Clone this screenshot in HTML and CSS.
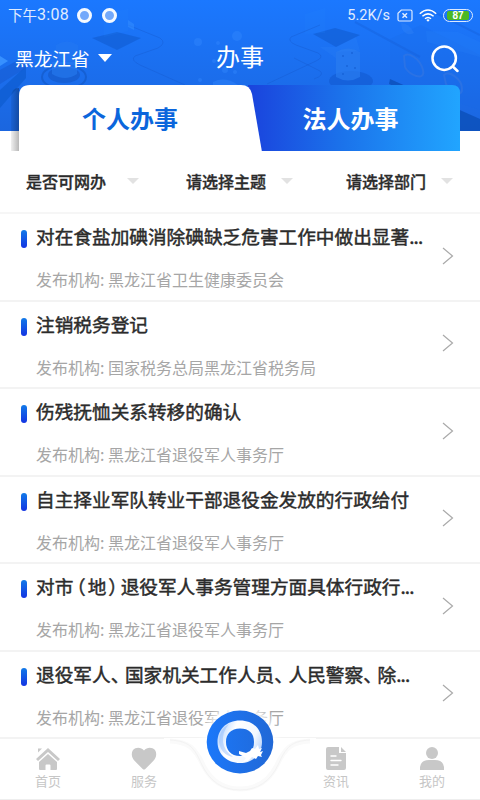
FILE: index.html
```html
<!DOCTYPE html>
<html lang="zh-CN">
<head>
<meta charset="utf-8">
<meta name="viewport" content="width=device-width">
<title>办事</title>
<link rel="stylesheet" href="styles.css">
</head>
<body>
<div class="app">
  <header class="header">
    <svg class="backdrop" width="480" height="131" viewBox="0 0 480 131" fill="none">
      <path d="M0 90 26 66V78L0 108Z" fill="#0958c9" opacity=".55"/>
      <path d="M0 56 8 61 0 66Z" fill="#3790ff"/>
      <path d="M0 70 22 58 26 68 0 84Z" fill="#1657cd" opacity=".5"/>
      <path d="M92 38 117 32 141 38 117 50ZM313 34 335 28 360 35 336 47Z" fill="#105bd0" opacity=".6"/>
      <path d="M104 37V14l24-5v22zM305 34V14l20-6v25z" fill="#2888ff" opacity=".12"/>
      <path d="M128 25 160 38Q167 43 158 48L135 56Q130 60 140 65L185 85M320 25 291 37Q287 41 296 45L318 53Q325 57 316 61L267 84M294 58 320 71Q325 75 314 79" stroke="#1557c8" opacity=".35"/>
      <path d="M128 20 134 24V30L128 27Z" fill="#3690ff" opacity=".5"/>
      <ellipse cx="64" cy="77" rx="22" ry="12" stroke="#1257c3" stroke-width="2" opacity=".6"/>
      <ellipse cx="64" cy="75" rx="16" ry="8" fill="#1760d5"/>
      <path d="M52 62h25v12q-12 8-25 0z" fill="#2980f6" opacity=".5"/>
      <path d="M56 45q11-7 22 0v13q-11 7-22 0z" fill="#2b7df1" opacity=".3"/>
      <ellipse cx="351" cy="81" rx="22" ry="10" fill="#1055cc" opacity=".5"/>
      <path d="M336 52q12-7 24 0v25q-12 7-24 0z" fill="#297cf0" opacity=".7"/>
      <path d="M320 47 336 58V52L360 51 356 37 336 47Z" fill="#3188fa" opacity=".2"/>
      <path d="M390 79 480 119V131H460V116L389 84Z" fill="#0b4db5" opacity=".75"/>
      <path d="M390 39 421 25 480 55V110L390 79Z" fill="#176be8" opacity=".2"/>
      <path d="M426 31 458 32 480 42V57L427 42Z" fill="#328bff" opacity=".15"/>
      <path d="M430 10 480 35M355 22 420 57" stroke="#1559d0" stroke-width="2" opacity=".3"/>
      <path d="M404 56c4-4 16 2 19 14s-15 5-18-3zM444 75c5-5 18 4 18 14s-12 2-16-5z" stroke="#3978df" stroke-width="2" opacity=".5"/>
      <path d="M401 23q8 0 13 10-7 4-12-4z" fill="#3989f7" opacity=".3"/>
      <g fill="#348aff" opacity=".4"><circle cx="198" cy="42" r="4"/><circle cx="218" cy="43" r="2"/><circle cx="237" cy="36" r="5"/><circle cx="214" cy="61" r="2"/><circle cx="225" cy="70" r="3"/><circle cx="235" cy="72" r="2"/><circle cx="200" cy="80" r="2"/><path d="M213 82q12-6 25 3h-25z"/></g>
      <g fill="#1159ce" opacity=".6"><circle cx="343" cy="56" r="1"/><circle cx="352" cy="53" r="1"/><circle cx="347" cy="66" r="1"/><circle cx="355" cy="68" r="1"/><circle cx="343" cy="74" r="1"/></g>
    </svg>
    <div class="status">
      <div class="status-left">
        <span class="ampm">下午</span><span class="clock">3:08</span>
        <i class="dot"></i><i class="dot"></i>
      </div>
      <div class="status-right">
        <span class="speed">5.2K/s</span>
        <svg class="sim" width="16" height="13" viewBox="0 0 16 13" fill="none" stroke="#e0ecff"><path d="M4.3 1H13.5Q15 1 15 2.5V10.5Q15 12 13.5 12H2.5Q1 12 1 10.5V4.3Z" stroke-width="1.2"/><path d="M5.5 4.3 10 8.7M10 4.3 5.5 8.7" stroke-width="1.5"/></svg>
        <svg class="wifi" width="18" height="13" viewBox="0 0 18 13" fill="none" stroke="#fff" stroke-width="1.5"><path d="M.8 4.7Q9-2.6 17.2 4.7M3.4 7.3Q9 2.4 14.6 7.3M6 9.8Q9 7.2 12 9.8"/><path d="M7.3 11 9 12.7 10.7 11Q9 9.7 7.3 11Z" fill="#fff" stroke="none"/></svg>
        <span class="battery"><b>87</b></span>
      </div>
    </div>
    <div class="bar">
      <div class="province">黑龙江省<i class="caret"></i></div>
      <h1>办事</h1>
      <svg class="search" width="28" height="28" viewBox="0 0 28 28" fill="none" stroke="#fff" stroke-width="2.5" stroke-linecap="round"><circle cx="13.2" cy="13.2" r="11.7"/><path d="M21.8 21.5 26.5 26"/></svg>
    </div>
    <div class="tabs">
      <svg class="tab-shape" width="449" height="67" viewBox="0 0 449 67">
        <defs>
          <linearGradient id="blue"><stop stop-color="#1a43dd"/><stop offset=".45" stop-color="#1b73eb"/><stop offset="1" stop-color="#21a5ff"/></linearGradient>
          <linearGradient id="shade"><stop stop-opacity=".06"/><stop offset="1" stop-opacity=".28"/></linearGradient>
        </defs>
        <path d="M0 66V12Q0 3 8 3V66Z" fill="url(#shade)"/>
        <path d="M237 0H441Q449 0 449 8V66H237Z" fill="url(#blue)"/>
        <path d="M8 67V11Q8 0 19 0H230Q239 0 241 9L251 67Z" fill="#fff"/>
      </svg>
      <div class="tab active">个人办事</div>
      <div class="tab">法人办事</div>
    </div>
  </header>

  <div class="filters">
    <div class="filter">是否可网办<i></i></div>
    <div class="filter">请选择主题<i></i></div>
    <div class="filter">请选择部门<i></i></div>
  </div>

  <main class="list">
    <article class="row"><i class="mark"></i><div class="copy"><h2>对在食盐加碘消除碘缺乏危害工作中做出显著<span class="dots">...</span></h2><p>发布机构: 黑龙江省卫生健康委员会</p></div><svg class="chev" width="12" height="18" viewBox="0 0 12 18"><path d="M1 1 10.5 9 1 17"/></svg></article>
    <article class="row"><i class="mark"></i><div class="copy"><h2>注销税务登记</h2><p>发布机构: 国家税务总局黑龙江省税务局</p></div><svg class="chev" width="12" height="18" viewBox="0 0 12 18"><path d="M1 1 10.5 9 1 17"/></svg></article>
    <article class="row"><i class="mark"></i><div class="copy"><h2>伤残抚恤关系转移的确认</h2><p>发布机构: 黑龙江省退役军人事务厅</p></div><svg class="chev" width="12" height="18" viewBox="0 0 12 18"><path d="M1 1 10.5 9 1 17"/></svg></article>
    <article class="row"><i class="mark"></i><div class="copy"><h2>自主择业军队转业干部退役金发放的行政给付</h2><p>发布机构: 黑龙江省退役军人事务厅</p></div><svg class="chev" width="12" height="18" viewBox="0 0 12 18"><path d="M1 1 10.5 9 1 17"/></svg></article>
    <article class="row"><i class="mark"></i><div class="copy"><h2>对市<span class="open">（</span>地<span class="close">）</span>退役军人事务管理方面具体行政行<span class="dots">...</span></h2><p>发布机构: 黑龙江省退役军人事务厅</p></div><svg class="chev" width="12" height="18" viewBox="0 0 12 18"><path d="M1 1 10.5 9 1 17"/></svg></article>
    <article class="row"><i class="mark"></i><div class="copy"><h2>退役军人<span class="pause">、</span>国家机关工作人员<span class="pause">、</span>人民警察<span class="pause">、</span>除<span class="dots">...</span></h2><p>发布机构: 黑龙江省退役军人事务厅</p></div><svg class="chev" width="12" height="18" viewBox="0 0 12 18"><path d="M1 1 10.5 9 1 17"/></svg></article>
  </main>

  <nav class="nav">
    <a><svg width="26" height="24" viewBox="0 0 26 24"><path d="M3 1.500H7L3 5.500ZM1 12 13 1 25 12 23 14 13 5 3 14Z"/><path d="M4 15 13 7 22 15V22Q22 23 21 23H15.500V18.500Q15.500 17.500 14.500 17.500H11.500Q10.500 17.500 10.500 18.500V23H5Q4 23 4 22Z"/></svg>首页</a>
    <a><svg width="26" height="24" viewBox="0 0 26 24"><path d="M13 3.500C16-.1 21-.2 24 3C26.400 7 25 11 22 14.300L14.300 22Q13 23.200 11.700 22L4 14.300C1 11-.4 7 2 3C5-.2 10-.1 13 3.500Z"/></svg>服务</a>
    <a class="home-slot"></a>
    <a><svg width="26" height="24" viewBox="0 0 26 24"><path d="M5 0H16V6H23V21Q23 23 21 23H5Q3 23 3 21V2Q3 0 5 0ZM18 0 23 5H18Z"/><path d="M8 9H13M8 13.500H18M8 18H15" stroke="#fff" stroke-width="1.400" stroke-linecap="round"/></svg>资讯</a>
    <a><svg width="26" height="24" viewBox="0 0 26 24"><circle cx="13" cy="6" r="6"/><path d="M1 23V20Q2 13 10 13H16Q24 13 25 20V23Z"/></svg>我的</a>
    <svg class="notch" width="160" height="90" viewBox="0 0 160 90">
      <defs>
        <linearGradient id="disc"><stop stop-color="#1b78fa"/><stop offset="1" stop-color="#2168d6"/></linearGradient>
        <linearGradient id="ring" x1="0" x2="1" y1=".3" y2=".7"><stop stop-color="#b5d4ff"/><stop offset=".3" stop-color="#fff"/><stop offset=".75" stop-color="#f2f8ff"/><stop offset="1" stop-color="#b9d3fa"/></linearGradient>
        <radialGradient id="halo"><stop offset=".75" stop-color="#fff" stop-opacity=".9"/><stop offset="1" stop-color="#fff" stop-opacity="0"/></radialGradient>
      </defs>
      <circle cx="80" cy="39" r="42" fill="url(#halo)"/>
      <path d="M4 37C28 37 33 43 42 62Q54 87 80 87Q106 87 118 62C127 43 132 37 156 37V35H4Z" fill="#fff"/>
      <path d="M10 38C29 39 35 45 43 62Q55 86 80 86Q105 86 117 62C125 45 131 39 150 38" fill="none" stroke="#fafafa" stroke-width="5"/>
      <path d="M10 37C29 38 34 44 42 62Q54 87 80 87Q106 87 118 62C126 44 131 38 150 37" fill="none" stroke="#f3f3f3"/>
      <ellipse cx="80" cy="39" rx="33.300" ry="31.500" fill="url(#disc)"/>
      <path fill-rule="evenodd" fill="url(#ring)" d="M80 17.500C94 17.500 102 27 102 39S93 60 80 60 57.500 51 57.500 39 66 17.500 80 17.500ZM80 25.500C71 25.500 66 31 66 39S71 53 80 53 94 48 94 39 89 25.500 80 25.500Z"/>
      <path d="M59 39Q59 26 69 21Q62 29 63 39Q64 47 73 54Q61 52 59 39" fill="#8bb9fb" opacity=".45"/>
      <path fill="#fff" d="M79 48 86 50 90 48 92 45 95 46 98 42 99 46 102 45 100 49 103 48 101 52 102 54 98 53 96 56 92 54 88 58 83 59 86 55 79 51Z"/>
    </svg>
  </nav>
</div>
</body>
</html>
```
FILE: styles.css
```css
* { box-sizing: border-box; }
body { margin: 0; background: #fff; color: #2b2b2b; font-family: "Noto Sans CJK SC", sans-serif; }
h1, h2, p { margin: 0; font-weight: 400; }
i { display: block; flex: none; }
svg { display: block; flex: none; }
.app { width: 480px; height: 800px; overflow: hidden; display: flex; flex-direction: column; }

.header { position: relative; height: 152px; flex: none; color: #fff; background: linear-gradient(#1b78ff, #1b66df) no-repeat 0 0 / 480px 131px; }
.backdrop { position: absolute; left: 0; top: 0; }
.status, .bar, .tabs { position: relative; display: flex; }
.status { height: 30px; padding: 0 7px 0 8px; align-items: center; justify-content: space-between; color: #e0ecff; }
.status-left, .status-right { display: flex; align-items: center; }
.ampm { font-size: 14.5px; line-height: 30px; }
.clock { font: 16px/30px Roboto, sans-serif; letter-spacing: .3px; }
.dot { width: 15px; height: 15px; border-radius: 50%; border: 3px solid #f4f9ff; background: #73a9fb; margin-left: 8px; }
.dot + .dot { margin-left: 10px; }
.speed { font: 14.5px/30px Roboto, sans-serif; letter-spacing: 0; margin-right: 7px; padding-top: 1px; }
.sim { margin-right: 6px; }
.wifi { margin-right: 6px; }
.battery { width: 30px; height: 13px; border: 1px solid #dceaff; border-radius: 7px; padding: 1px 3px; }
.battery b { display: block; height: 9px; border-radius: 2px; background: #4bb824; color: #fff; font: bold 10px/9.5px "Liberation Sans", sans-serif; text-align: center; }
.bar { height: 55px; padding: 0 21px 0 15px; align-items: center; justify-content: space-between; }
.province { display: flex; align-items: center; width: 185px; font-size: 18.67px; line-height: 28px; }
.caret { margin-left: 8px; border: 7.5px solid transparent; border-top: 8px solid #fff; border-bottom: 0; }
.bar h1 { font-size: 24px; line-height: 36px; width: 48px; margin: -4px auto 0 16px; }
.search { margin-top: 2px; }
.tabs { margin-left: 11px; width: 449px; height: 67px; }
.tab-shape { position: absolute; left: 0; top: 0; }
.tab { position: relative; width: 218px; margin-left: 10px; text-align: center; font-size: 24px; font-weight: 700; line-height: 65px; }
.tab + .tab { width: 209px; margin-left: 7px; }
.tab.active { color: #0b66dc; }

.filters { height: 62px; flex: none; display: flex; padding-left: 26px; border-bottom: 2px solid #f6f6f6; font-size: 16px; font-weight: 500; line-height: 59px; -webkit-text-stroke: .35px #2b2b2b; }
.filter { display: flex; flex: none; width: 160px; }
.filter:last-child { width: 120px; }
.filter i { margin: 26px 0 0 15px; height: 6px; border: 6.5px solid transparent; border-top: 6px solid #e2e2e2; border-bottom: 0; }
.filter:first-child i { margin-left: 21px; }

.list { flex: none; height: 525px; display: grid; grid-template-rows: repeat(6, 87.5px); }
.row { display: flex; padding: 0 26px 0 21px; border-bottom: 2px solid #f3f3f3; }
.mark { width: 6px; height: 18px; margin-top: 16px; border-radius: 3px; background: linear-gradient(#127ae8, #1334e2); }
.copy { flex: 1; padding-left: 9px; white-space: nowrap; }
.row h2 { font-size: 18.67px; line-height: 28px; margin-top: 8px; -webkit-text-stroke: .45px #2b2b2b; }
.row p { font-size: 16px; line-height: 24px; margin-top: 17px; color: #a6a6a6; }
.chev { margin-top: 32.5px; fill: none; stroke: #aaa; stroke-width: 1.2px; }
.open, .close, .pause { font-feature-settings: "halt"; }
.pause { margin-right: 5px; }
.open { margin-left: 3px; margin-right: 2px; }
.close { margin-left: 2px; margin-right: 3px; }
.dots { letter-spacing: -.8px; }

.nav { position: relative; height: 61px; flex: none; display: grid; grid-template-columns: repeat(5, 96px); background: #fff; border-bottom: 1px solid #eee; }
.nav a { display: flex; flex-direction: column; align-items: center; padding-top: 8px; font-size: 13px; line-height: 20px; color: #c6c6c6; }
.nav a svg { fill: #c8c8c8; }
.notch { position: absolute; left: 160px; top: -36px; }
```
